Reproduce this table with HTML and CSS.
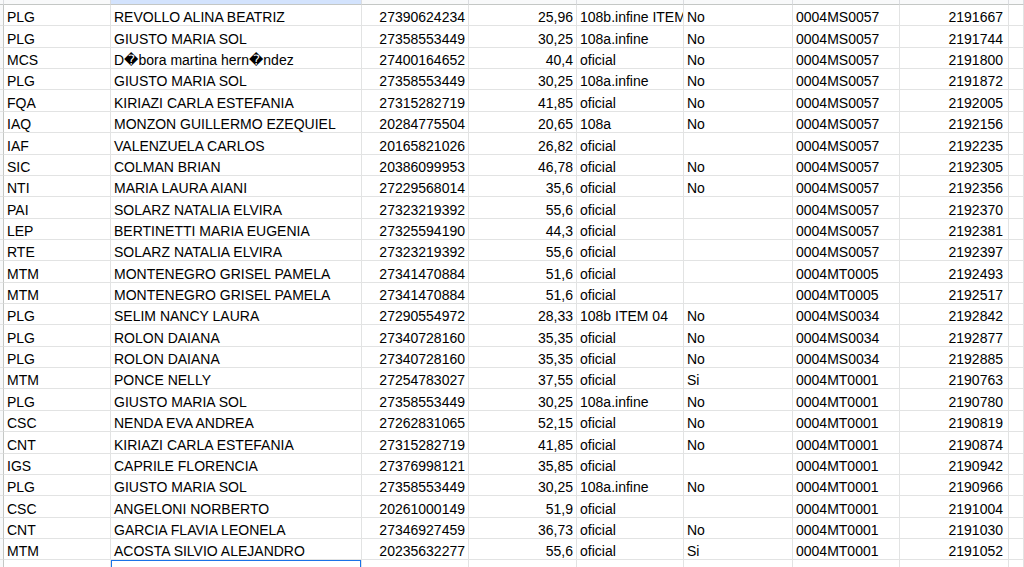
FILE: index.html
```html
<!DOCTYPE html>
<html lang="es">
<head>
<meta charset="utf-8">
<title>Hoja</title>
<link rel="stylesheet" href="styles.css">
</head>
<body>
<div class="sheet">
  <div class="row head">
    <div class="c rh"></div><div class="c"></div><div class="c sel-col"></div><div class="c"></div><div class="c"></div><div class="c"></div><div class="c"></div><div class="c"></div><div class="c"></div><div class="c"></div>
  </div>
  <div class="row"><div class="c rh"></div><div class="c">PLG</div><div class="c">REVOLLO ALINA BEATRIZ</div><div class="c n">27390624234</div><div class="c n">25,96</div><div class="c">108b.infine ITEM 04</div><div class="c">No</div><div class="c">0004MS0057</div><div class="c n h">2191667</div><div class="c"></div></div>
  <div class="row"><div class="c rh"></div><div class="c">PLG</div><div class="c">GIUSTO MARIA SOL</div><div class="c n">27358553449</div><div class="c n">30,25</div><div class="c">108a.infine</div><div class="c">No</div><div class="c">0004MS0057</div><div class="c n h">2191744</div><div class="c"></div></div>
  <div class="row"><div class="c rh"></div><div class="c">MCS</div><div class="c">D�bora martina hern�ndez</div><div class="c n">27400164652</div><div class="c n">40,4</div><div class="c">oficial</div><div class="c">No</div><div class="c">0004MS0057</div><div class="c n h">2191800</div><div class="c"></div></div>
  <div class="row"><div class="c rh"></div><div class="c">PLG</div><div class="c">GIUSTO MARIA SOL</div><div class="c n">27358553449</div><div class="c n">30,25</div><div class="c">108a.infine</div><div class="c">No</div><div class="c">0004MS0057</div><div class="c n h">2191872</div><div class="c"></div></div>
  <div class="row"><div class="c rh"></div><div class="c">FQA</div><div class="c">KIRIAZI CARLA ESTEFANIA</div><div class="c n">27315282719</div><div class="c n">41,85</div><div class="c">oficial</div><div class="c">No</div><div class="c">0004MS0057</div><div class="c n h">2192005</div><div class="c"></div></div>
  <div class="row"><div class="c rh"></div><div class="c">IAQ</div><div class="c">MONZON GUILLERMO EZEQUIEL</div><div class="c n">20284775504</div><div class="c n">20,65</div><div class="c">108a</div><div class="c">No</div><div class="c">0004MS0057</div><div class="c n h">2192156</div><div class="c"></div></div>
  <div class="row"><div class="c rh"></div><div class="c">IAF</div><div class="c">VALENZUELA CARLOS</div><div class="c n">20165821026</div><div class="c n">26,82</div><div class="c">oficial</div><div class="c"></div><div class="c">0004MS0057</div><div class="c n h">2192235</div><div class="c"></div></div>
  <div class="row"><div class="c rh"></div><div class="c">SIC</div><div class="c">COLMAN BRIAN</div><div class="c n">20386099953</div><div class="c n">46,78</div><div class="c">oficial</div><div class="c">No</div><div class="c">0004MS0057</div><div class="c n h">2192305</div><div class="c"></div></div>
  <div class="row"><div class="c rh"></div><div class="c">NTI</div><div class="c">MARIA LAURA AIANI</div><div class="c n">27229568014</div><div class="c n">35,6</div><div class="c">oficial</div><div class="c">No</div><div class="c">0004MS0057</div><div class="c n h">2192356</div><div class="c"></div></div>
  <div class="row"><div class="c rh"></div><div class="c">PAI</div><div class="c">SOLARZ NATALIA ELVIRA</div><div class="c n">27323219392</div><div class="c n">55,6</div><div class="c">oficial</div><div class="c"></div><div class="c">0004MS0057</div><div class="c n h">2192370</div><div class="c"></div></div>
  <div class="row"><div class="c rh"></div><div class="c">LEP</div><div class="c">BERTINETTI MARIA EUGENIA</div><div class="c n">27325594190</div><div class="c n">44,3</div><div class="c">oficial</div><div class="c"></div><div class="c">0004MS0057</div><div class="c n h">2192381</div><div class="c"></div></div>
  <div class="row"><div class="c rh"></div><div class="c">RTE</div><div class="c">SOLARZ NATALIA ELVIRA</div><div class="c n">27323219392</div><div class="c n">55,6</div><div class="c">oficial</div><div class="c"></div><div class="c">0004MS0057</div><div class="c n h">2192397</div><div class="c"></div></div>
  <div class="row"><div class="c rh"></div><div class="c">MTM</div><div class="c">MONTENEGRO GRISEL PAMELA</div><div class="c n">27341470884</div><div class="c n">51,6</div><div class="c">oficial</div><div class="c"></div><div class="c">0004MT0005</div><div class="c n h">2192493</div><div class="c"></div></div>
  <div class="row"><div class="c rh"></div><div class="c">MTM</div><div class="c">MONTENEGRO GRISEL PAMELA</div><div class="c n">27341470884</div><div class="c n">51,6</div><div class="c">oficial</div><div class="c"></div><div class="c">0004MT0005</div><div class="c n h">2192517</div><div class="c"></div></div>
  <div class="row"><div class="c rh"></div><div class="c">PLG</div><div class="c">SELIM NANCY LAURA</div><div class="c n">27290554972</div><div class="c n">28,33</div><div class="c">108b ITEM 04</div><div class="c">No</div><div class="c">0004MS0034</div><div class="c n h">2192842</div><div class="c"></div></div>
  <div class="row"><div class="c rh"></div><div class="c">PLG</div><div class="c">ROLON DAIANA</div><div class="c n">27340728160</div><div class="c n">35,35</div><div class="c">oficial</div><div class="c">No</div><div class="c">0004MS0034</div><div class="c n h">2192877</div><div class="c"></div></div>
  <div class="row"><div class="c rh"></div><div class="c">PLG</div><div class="c">ROLON DAIANA</div><div class="c n">27340728160</div><div class="c n">35,35</div><div class="c">oficial</div><div class="c">No</div><div class="c">0004MS0034</div><div class="c n h">2192885</div><div class="c"></div></div>
  <div class="row"><div class="c rh"></div><div class="c">MTM</div><div class="c">PONCE NELLY</div><div class="c n">27254783027</div><div class="c n">37,55</div><div class="c">oficial</div><div class="c">Si</div><div class="c">0004MT0001</div><div class="c n h">2190763</div><div class="c"></div></div>
  <div class="row"><div class="c rh"></div><div class="c">PLG</div><div class="c">GIUSTO MARIA SOL</div><div class="c n">27358553449</div><div class="c n">30,25</div><div class="c">108a.infine</div><div class="c">No</div><div class="c">0004MT0001</div><div class="c n h">2190780</div><div class="c"></div></div>
  <div class="row"><div class="c rh"></div><div class="c">CSC</div><div class="c">NENDA EVA ANDREA</div><div class="c n">27262831065</div><div class="c n">52,15</div><div class="c">oficial</div><div class="c">No</div><div class="c">0004MT0001</div><div class="c n h">2190819</div><div class="c"></div></div>
  <div class="row"><div class="c rh"></div><div class="c">CNT</div><div class="c">KIRIAZI CARLA ESTEFANIA</div><div class="c n">27315282719</div><div class="c n">41,85</div><div class="c">oficial</div><div class="c">No</div><div class="c">0004MT0001</div><div class="c n h">2190874</div><div class="c"></div></div>
  <div class="row"><div class="c rh"></div><div class="c">IGS</div><div class="c">CAPRILE FLORENCIA</div><div class="c n">27376998121</div><div class="c n">35,85</div><div class="c">oficial</div><div class="c"></div><div class="c">0004MT0001</div><div class="c n h">2190942</div><div class="c"></div></div>
  <div class="row"><div class="c rh"></div><div class="c">PLG</div><div class="c">GIUSTO MARIA SOL</div><div class="c n">27358553449</div><div class="c n">30,25</div><div class="c">108a.infine</div><div class="c">No</div><div class="c">0004MT0001</div><div class="c n h">2190966</div><div class="c"></div></div>
  <div class="row"><div class="c rh"></div><div class="c">CSC</div><div class="c">ANGELONI NORBERTO</div><div class="c n">20261000149</div><div class="c n">51,9</div><div class="c">oficial</div><div class="c"></div><div class="c">0004MT0001</div><div class="c n h">2191004</div><div class="c"></div></div>
  <div class="row"><div class="c rh"></div><div class="c">CNT</div><div class="c">GARCIA FLAVIA LEONELA</div><div class="c n">27346927459</div><div class="c n">36,73</div><div class="c">oficial</div><div class="c">No</div><div class="c">0004MT0001</div><div class="c n h">2191030</div><div class="c"></div></div>
  <div class="row"><div class="c rh"></div><div class="c">MTM</div><div class="c">ACOSTA SILVIO ALEJANDRO</div><div class="c n">20235632277</div><div class="c n">55,6</div><div class="c">oficial</div><div class="c">Si</div><div class="c">0004MT0001</div><div class="c n h">2191052</div><div class="c"></div></div>
  <div class="row"><div class="c rh"></div><div class="c"></div><div class="c selected"></div><div class="c"></div><div class="c"></div><div class="c"></div><div class="c"></div><div class="c"></div><div class="c"></div><div class="c"></div></div>
</div>
</body>
</html>
```
FILE: styles.css
```css
html, body {
  margin: 0;
  padding: 0;
  background: #ffffff;
  overflow: hidden;
}

.sheet {
  display: flex;
  flex-direction: column;
  width: 1024px;
  height: 567px;
  overflow: hidden;
  font-family: "Liberation Sans", Arial, "DejaVu Sans", sans-serif;
  font-size: 14px;
  color: #000000;
}

.row {
  display: grid;
  grid-template-columns: 4px 107px 251px 107px 108px 107px 109px 107px 109px 1fr;
  height: 21.36px;
  flex: none;
}

.c {
  box-sizing: border-box;
  border-right: 1px solid #e2e3e3;
  border-bottom: 1px solid #e2e3e3;
  padding: 0 3px 0 3px;
  line-height: 16px;
  white-space: nowrap;
  overflow: hidden;
  display: flex;
  align-items: flex-end;
  min-width: 0;
  position: relative;
}

.c.n {
  justify-content: flex-end;
  padding-right: 3px;
}

.c.h {
  padding-right: 5px;
}

.rh {
  background: #f8f9fa;
  border-right-color: #c4c7c5;
  padding: 0;
}

.row.head {
  height: 5px;
}

.row.head .c {
  background: #f8f9fa;
  border-bottom-color: #c4c7c5;
  border-right-color: #dadce0;
  padding: 0;
}

.row.head .c.sel-col {
  background: #d3e3fd;
}

.c.selected::after {
  content: "";
  position: absolute;
  left: -1px;
  top: -1px;
  right: -1px;
  bottom: -1px;
  border: 2px solid #1a73e8;
}
```
